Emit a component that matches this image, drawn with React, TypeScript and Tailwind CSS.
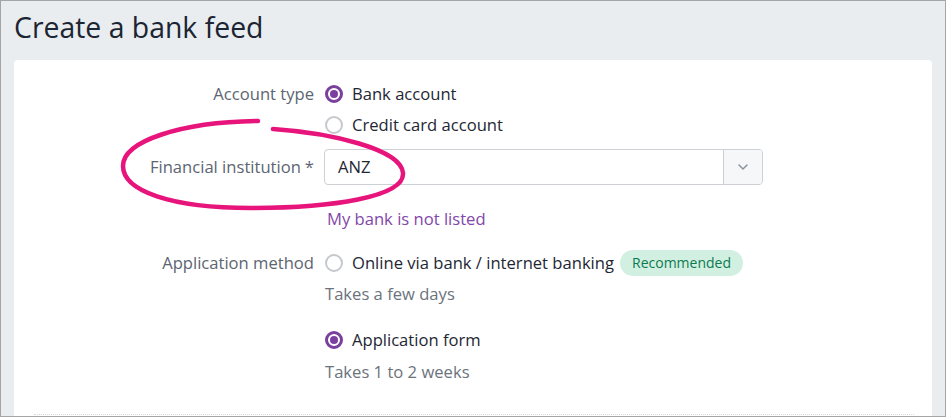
import React from "react";

function Radio({ checked }: { checked?: boolean }) {
  return checked ? (
    <span className="flex h-[18px] w-[18px] shrink-0 items-center justify-center rounded-full border-[3px] border-[#7b3f9d] bg-white">
      <span className="h-[8px] w-[8px] rounded-full bg-[#7b3f9d]" />
    </span>
  ) : (
    <span className="h-[18px] w-[18px] shrink-0 rounded-full border-2 border-[#c5c9cd] bg-white" />
  );
}

export default function App() {
  return (
    <div
      className="relative h-[417px] w-[946px] overflow-hidden border border-[#a5a5a5] bg-[#e9edf0] text-[#1e2733]"
      style={{ fontFamily: "'Open Sans', 'Noto Sans', sans-serif" }}
    >
      <div className="flex h-[59px] items-start pl-[13px] pt-[7px]">
        <h1 className="text-[28.4px] leading-[38px] text-[#1b2533]">Create a bank feed</h1>
      </div>
      <div className="mx-[13px] h-[400px] rounded-t-[4px] bg-white pt-[22px] text-[16.6px] leading-[24px]">
        {/* Account type */}
        <div className="flex">
          <div className="w-[300px] text-right text-[#5c6571]">Account type</div>
          <div className="ml-[11px] flex flex-col gap-[7px]">
            <div className="flex items-center gap-[9px]">
              <Radio checked />
              <span>Bank account</span>
            </div>
            <div className="flex items-center gap-[9px]">
              <Radio />
              <span>Credit card account</span>
            </div>
          </div>
        </div>
        {/* Financial institution */}
        <div className="mt-[12px] flex items-center">
          <div className="w-[300px] text-right text-[#5c6571]">
            Financial institution<span className="ml-[4px]">*</span>
          </div>
          <div className="ml-[10px] flex h-[36px] w-[439px] overflow-hidden rounded-[4px] border border-[#cdd1d5]">
            <div className="flex flex-1 items-center pl-[13px]">ANZ</div>
            <div className="flex w-[39px] items-center justify-center border-l border-[#cdd1d5] bg-[#f6f7f8]">
              <svg width="10" height="6" viewBox="0 0 10 6" fill="none">
                <path d="M1 1l4 4 4-4" stroke="#8a949e" strokeWidth="1.5" strokeLinecap="round" strokeLinejoin="round" />
              </svg>
            </div>
          </div>
        </div>
        <div className="ml-[313px] mt-[22px] text-[#8247a8]">My bank is not listed</div>
        {/* Application method */}
        <div className="mt-[19px] flex">
          <div className="flex h-[26px] w-[300px] items-center justify-end text-[#5c6571]">Application method</div>
          <div className="ml-[11px] flex flex-col">
            <div className="flex h-[26px] items-center gap-[9px]">
              <Radio />
              <span>Online via bank / internet banking</span>
              <span className="-ml-[3px] rounded-full bg-[#d2f0e2] px-[12px] text-[14px] leading-[26px] text-[#0c7a50]">
                Recommended
              </span>
            </div>
            <div className="mt-[6px] text-[#6b737d]">Takes a few days</div>
            <div className="mt-[22px] flex items-center gap-[9px]">
              <Radio checked />
              <span>Application form</span>
            </div>
            <div className="mt-[8px] text-[#6b737d]">Takes 1 to 2 weeks</div>
          </div>
        </div>
      </div>
      <div className="absolute bottom-[1px] left-[33px] w-[880px] border-t border-dotted border-[#d5dbe0]" />
      <svg className="pointer-events-none absolute left-0 top-0" width="946" height="417">
        <path
          d="M272 128 C 330 132, 400 148, 402 172 C 404 196, 330 207, 250 207 C 170 207, 122 190, 122 165 C 122 140, 180 121, 257 120"
          fill="none"
          stroke="#e7157b"
          strokeWidth="4.5"
          strokeLinecap="round"
        />
      </svg>
    </div>
  );
}
